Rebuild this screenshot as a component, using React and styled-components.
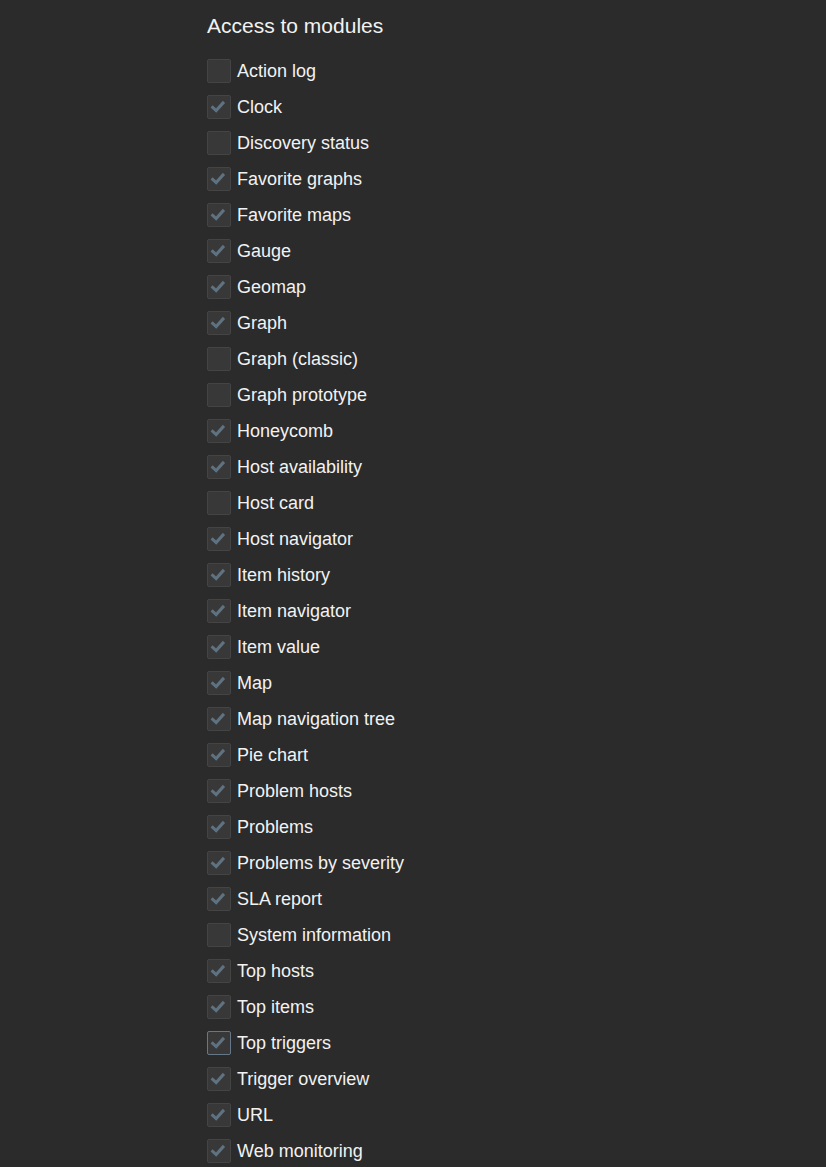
import React from 'react';
import styled, { createGlobalStyle } from 'styled-components';

const GlobalStyle = createGlobalStyle`
    html, body {
        margin: 0;
        padding: 0;
        background: #2b2b2b;
    }
    body {
        font-family: "Liberation Sans", Arial, sans-serif;
        color: #f2f2f2;
    }
`

const Page = styled.div`
    min-height: 1167px;
    padding: 14px 0 0 207px;
    box-sizing: border-box;
    background: #2b2b2b;
`

const Title = styled.h2`
    margin: 0 0 21px;
    font-size: 21px;
    line-height: 24px;
    font-weight: normal;
    color: #f2f2f2;
`

const List = styled.ul`
    list-style: none;
    margin: 0;
    padding: 0;
    display: flex;
    flex-direction: column;
    gap: 12px;
`

const Row = styled.li`
    display: flex;
    align-items: center;
    gap: 6px;
    height: 24px;
    font-size: 18px;
    color: #f2f2f2;
`

const Box = styled.span`
    width: 24px;
    height: 24px;
    box-sizing: border-box;
    border: 1px solid ${p => (p.$focused ? '#667888' : '#444444')};
    border-radius: 2px;
    background: #383838;
    display: flex;
    align-items: center;
    justify-content: center;
    flex-shrink: 0;
`

const modules = [
    ['Action log', false],
    ['Clock', true],
    ['Discovery status', false],
    ['Favorite graphs', true],
    ['Favorite maps', true],
    ['Gauge', true],
    ['Geomap', true],
    ['Graph', true],
    ['Graph (classic)', false],
    ['Graph prototype', false],
    ['Honeycomb', true],
    ['Host availability', true],
    ['Host card', false],
    ['Host navigator', true],
    ['Item history', true],
    ['Item navigator', true],
    ['Item value', true],
    ['Map', true],
    ['Map navigation tree', true],
    ['Pie chart', true],
    ['Problem hosts', true],
    ['Problems', true],
    ['Problems by severity', true],
    ['SLA report', true],
    ['System information', false],
    ['Top hosts', true],
    ['Top items', true],
    ['Top triggers', true, true],
    ['Trigger overview', true],
    ['URL', true],
    ['Web monitoring', true],
]

const Check = () => (
    <svg width="24" height="24" viewBox="0 0 24 24" style={{ position: 'relative', left: '-1px', top: '-1px' }}>
        <path d="M5 12.5 L10 17 L18.5 7.5" fill="none" stroke="#5e7282" strokeWidth="3.3" strokeLinecap="butt" strokeLinejoin="miter" />
    </svg>
)

export default function App() {
    return <>
        <GlobalStyle />
        <Page>
            <Title>Access to modules</Title>
            <List>
                {modules.map(([name, checked, focused]) => (
                    <Row key={name}>
                        <Box $focused={focused}>{checked && <Check />}</Box>
                        {name}
                    </Row>
                ))}
            </List>
        </Page>
    </>
}
